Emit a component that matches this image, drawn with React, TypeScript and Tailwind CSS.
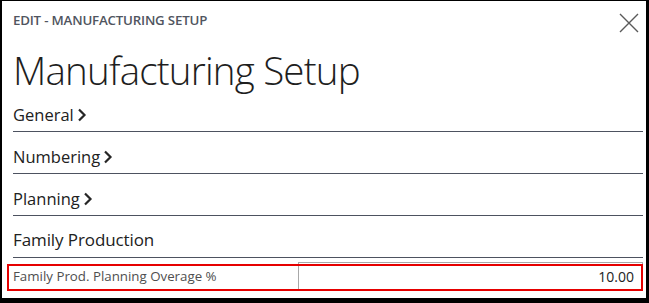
import React from 'react';

const sections = [
  { label: 'General', chevron: true },
  { label: 'Numbering', chevron: true },
  { label: 'Planning', chevron: true },
];

const Chevron: React.FC = () => (
  <svg width="10" height="14" viewBox="0 0 10 14" className="ml-[3px]">
    <path d="M2 1.5 L7.5 7 L2 12.5" fill="none" stroke="#262626" strokeWidth="2.2" />
  </svg>
);

const App: React.FC = () => {
  return (
    <div
      className="w-[649px] h-[303px] bg-white border-black border-l-2 border-t border-r-[3px] border-b-[5px] text-[#212121] overflow-hidden"
      style={{ fontFamily: '"Open Sans", "Noto Sans", sans-serif' }}
    >
      <div className="pl-[11px] pr-[3px]">
        {/* Header */}
        <div className="h-[45px] flex items-start justify-between">
          <div className="pt-[10px] text-[13.3px] font-semibold text-[#505560] tracking-[-0.2px] leading-[18px]">
            EDIT - MANUFACTURING SETUP
          </div>
          <button className="mt-[12px] mr-[4px]">
            <svg width="20" height="20" viewBox="0 0 20 20">
              <path d="M1 1 L19 19 M19 1 L1 19" stroke="#5a5a5a" strokeWidth="1.4" fill="none" />
            </svg>
          </button>
        </div>

        {/* Title */}
        <h1 className="h-[44px] text-[38.5px] font-light leading-[48px] tracking-[-0.8px] text-[#1e1e1e] whitespace-nowrap">
          Manufacturing Setup
        </h1>

        {/* Collapsed groups */}
        {sections.map((s) => (
          <div key={s.label} className="h-[42px] border-b border-[#4d5260] flex items-start pt-[14px]">
            <span className="text-[16.5px] leading-[22px] flex items-center">
              {s.label}
              {s.chevron && <Chevron />}
            </span>
          </div>
        ))}

        <div className="h-[42px] border-b border-[#4d5260] flex items-start pt-[12px]">
          <span className="text-[17px] leading-[24px] tracking-[-0.1px]">Family Production</span>
        </div>

        {/* Field row */}
        <div className="relative mt-[4px] h-[29px] flex">
          <div className="w-[285px] flex items-center pt-[1px] text-[13.3px] text-[#4f4f4f]">
            Family Prod. Planning Overage %
          </div>
          <div className="flex-1 border border-[#a8a8a8] flex items-center justify-end pr-[8px] text-[14px] text-[#222]">
            10.00
          </div>
          <div className="absolute left-[-6px] right-0 top-[2px] bottom-0 border-[2.5px] border-[#e60000] pointer-events-none" />
        </div>
      </div>
    </div>
  );
};

export default App;
